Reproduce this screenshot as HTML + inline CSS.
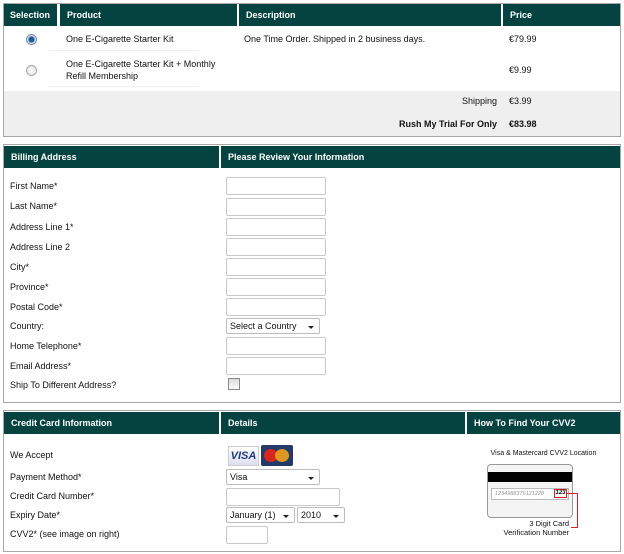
<!DOCTYPE html>
<html><head><meta charset="utf-8"><style>
*{margin:0;padding:0;box-sizing:border-box}
body{width:624px;height:554px;background:#fff;font-family:"Liberation Sans",Arial,sans-serif;font-size:9px;color:#111;position:relative;overflow:hidden}
.a{position:absolute}
.box{position:absolute;border:1px solid #a8a8a8;background:#fff}
.h{position:absolute;background:#04433f;color:#fff;font-weight:bold;font-size:9px;line-height:22px;padding-left:7px}
.l{position:absolute;left:10px;line-height:12px}
.in{position:absolute;left:226px;width:100px;height:18px;border:1px solid #c9c9c9;border-radius:2px;background:#fff}
.sel{position:absolute;height:16px;border:1px solid #bdbdbd;border-radius:2px;background:#fff;line-height:14px;padding-left:3px;font-size:9px}
.sel:after{content:"";position:absolute;right:5px;top:7px;border-left:3px solid transparent;border-right:3px solid transparent;border-top:3px solid #222}
</style></head><body>
<div class="box" style="left:3px;top:3px;width:618px;height:134px"></div>
<div class="a" style="left:4px;top:91px;width:616px;height:45px;background:#efefef"></div>
<div class="h" style="left:4px;top:4px;width:53px;padding-left:6px">Selection</div>
<div class="h" style="left:60px;top:4px;width:177px">Product</div>
<div class="h" style="left:239px;top:4px;width:262px">Description</div>
<div class="h" style="left:503px;top:4px;width:117px">Price</div>
<div class="a" style="left:26px;top:34px;width:11px;height:11px;border-radius:50%;border:1px solid #889;background:radial-gradient(circle,#1a5a9a 0 2.5px,#6aa0d0 3px,#e8eef4 4px)"></div>
<div class="a" style="left:26px;top:65px;width:11px;height:11px;border-radius:50%;border:1px solid #aaa;background:radial-gradient(circle,#fff,#ddd)"></div>
<div class="a" style="left:49px;top:50px;width:150px;height:1px;background:#eee"></div>
<div class="a" style="left:49px;top:86px;width:150px;height:1px;background:#eee"></div>
<div class="a" style="left:66px;top:34px">One E-Cigarette Starter Kit</div>
<div class="a" style="left:244px;top:34px">One Time Order. Shipped in 2 business days.</div>
<div class="a" style="left:509px;top:34px">€79.99</div>
<div class="a" style="left:66px;top:58px;line-height:12px">One E-Cigarette Starter Kit + Monthly<br>Refill Membership</div>
<div class="a" style="left:509px;top:65px">€9.99</div>
<div class="a" style="right:127px;top:96px">Shipping</div>
<div class="a" style="left:509px;top:96px">€3.99</div>
<div class="a" style="right:127px;top:119px;font-weight:bold">Rush My Trial For Only</div>
<div class="a" style="left:509px;top:119px;font-weight:bold">€83.98</div>

<div class="box" style="left:3px;top:144px;width:618px;height:259px"></div>
<div class="h" style="left:4px;top:146px;width:215px">Billing Address</div>
<div class="h" style="left:221px;top:146px;width:399px">Please Review Your Information</div>
<div class="l" style="top:180px">First Name*</div><div class="in" style="top:177px"></div>
<div class="l" style="top:200px">Last Name*</div><div class="in" style="top:198px"></div>
<div class="l" style="top:221px">Address Line 1*</div><div class="in" style="top:218px"></div>
<div class="l" style="top:241px">Address Line 2</div><div class="in" style="top:238px"></div>
<div class="l" style="top:261px">City*</div><div class="in" style="top:258px"></div>
<div class="l" style="top:281px">Province*</div><div class="in" style="top:278px"></div>
<div class="l" style="top:301px">Postal Code*</div><div class="in" style="top:298px"></div>
<div class="l" style="top:320px">Country:</div><div class="sel" style="left:226px;top:318px;width:94px">Select a Country</div>
<div class="l" style="top:340px">Home Telephone*</div><div class="in" style="top:337px"></div>
<div class="l" style="top:360px">Email Address*</div><div class="in" style="top:357px"></div>
<div class="l" style="top:379px">Ship To Different Address?</div>
<div class="a" style="left:228px;top:378px;width:12px;height:12px;border:1px solid #888;background:linear-gradient(#ddd,#fafafa)"></div>

<div class="box" style="left:3px;top:410px;width:618px;height:142px"></div>
<div class="h" style="left:4px;top:412px;width:215px">Credit Card Information</div>
<div class="h" style="left:221px;top:412px;width:244px">Details</div>
<div class="h" style="left:467px;top:412px;width:153px">How To Find Your CVV2</div>
<div class="l" style="top:449px">We Accept</div>
<div class="a" style="left:228px;top:446px;width:31px;height:20px;background:linear-gradient(#fff,#dde);border:1px solid #ccc;color:#1a3d8a;font-weight:bold;font-style:italic;font-size:11px;line-height:18px;text-align:center">VISA</div>
<div class="a" style="left:261px;top:445px;width:32px;height:21px;background:#233a6a;border-radius:2px"><div class="a" style="left:3px;top:4px;width:14px;height:13px;border-radius:50%;background:#d8261c"></div><div class="a" style="left:14px;top:4px;width:14px;height:13px;border-radius:50%;background:#f3a11b;opacity:.9"></div></div>
<div class="l" style="top:471px">Payment Method*</div><div class="sel" style="left:226px;top:469px;width:94px">Visa</div>
<div class="l" style="top:490px">Credit Card Number*</div><div class="in" style="top:488px;width:114px"></div>
<div class="l" style="top:509px">Expiry Date*</div>
<div class="sel" style="left:226px;top:507px;width:69px">January (1)</div>
<div class="sel" style="left:297px;top:507px;width:48px">2010</div>
<div class="l" style="top:528px">CVV2* (see image on right)</div><div class="in" style="top:526px;width:42px"></div>
<div class="a" style="left:467px;top:450px;width:153px;text-align:center;font-size:7px">Visa &amp; Mastercard CVV2 Location</div>
<div class="a" style="left:487px;top:464px;width:86px;height:54px;border:1px solid #999;border-radius:4px;background:#f4f4f4"></div>
<div class="a" style="left:488px;top:472px;width:84px;height:10px;background:#000"></div>
<div class="a" style="left:491px;top:488px;width:78px;height:12px;background:#fff;border:1px solid #bbb;font-size:5.5px;font-style:italic;color:#999;line-height:10px;padding-left:3px">1234988376121228</div>
<div class="a" style="left:554px;top:489px;width:13px;height:9px;border:1px solid #e02020;font-size:6px;font-weight:bold;font-style:italic;line-height:7px;text-align:center">123</div>
<div class="a" style="left:567px;top:493px;width:11px;height:1px;background:#e02020"></div>
<div class="a" style="left:577px;top:493px;width:1px;height:35px;background:#e02020"></div>
<div class="a" style="left:571px;top:527px;width:7px;height:1px;background:#e02020"></div>
<div class="a" style="left:480px;top:519px;width:89px;text-align:right;font-size:7.5px;line-height:9px">3 Digit Card<br>Verification Number</div>
</body></html>
